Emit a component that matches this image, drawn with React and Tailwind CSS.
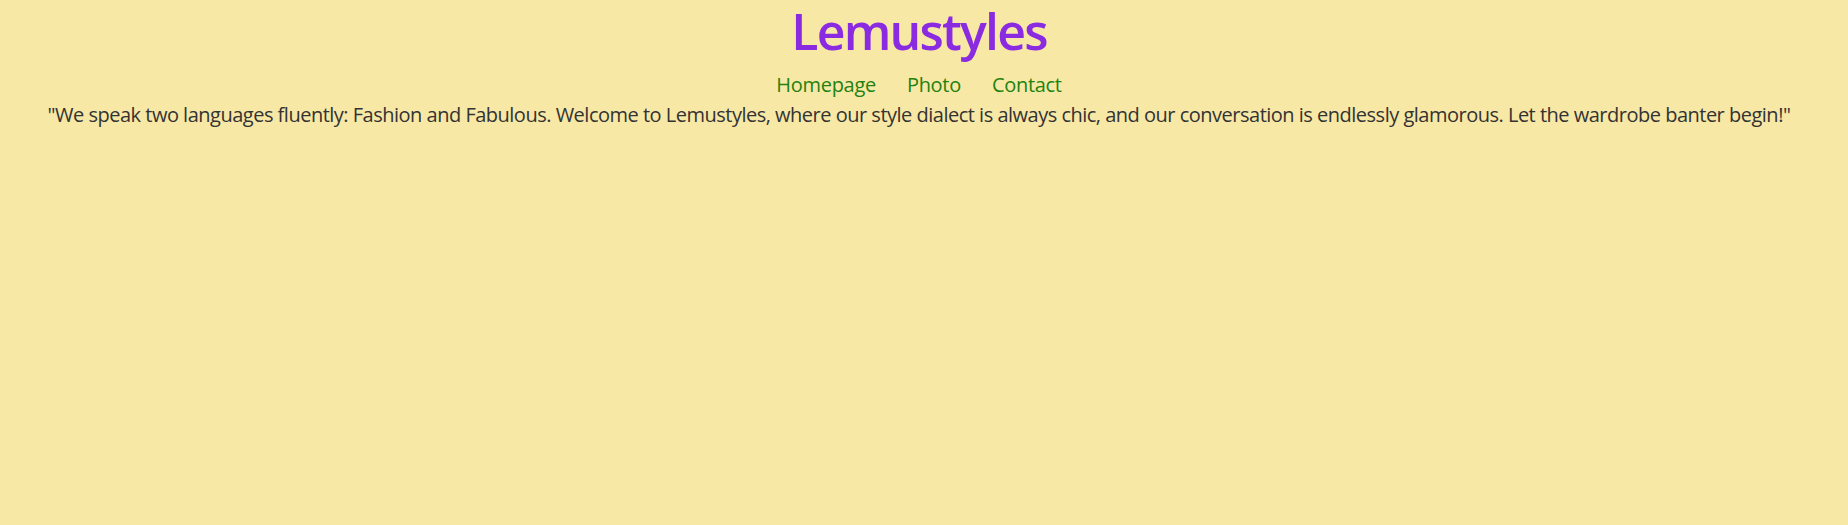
export default function App() {
  return (
    <div className="min-h-[525px] w-full bg-[#f8e8a6] pr-[10px] text-center" style={{ fontFamily: "'Open Sans', sans-serif" }}>
      <h1 className="pt-[1px] text-[50px] font-semibold leading-[60px] tracking-[-1.8px] text-[#8a2be2]">Lemustyles</h1>
      <nav className="mt-[11px] flex justify-center gap-[31px] text-[20px] leading-[26px] tracking-[-0.3px] text-[#23820f]">
        <a href="#">Homepage</a>
        <a href="#">Photo</a>
        <a href="#">Contact</a>
      </nav>
      <p className="mt-[3px] text-[20px] leading-[28px] tracking-[-0.5px] text-[#333333]">
        "We speak two languages fluently: Fashion and Fabulous. Welcome to Lemustyles, where our style dialect is always chic, and our conversation is endlessly glamorous. Let the wardrobe banter begin!"
      </p>
    </div>
  );
}
